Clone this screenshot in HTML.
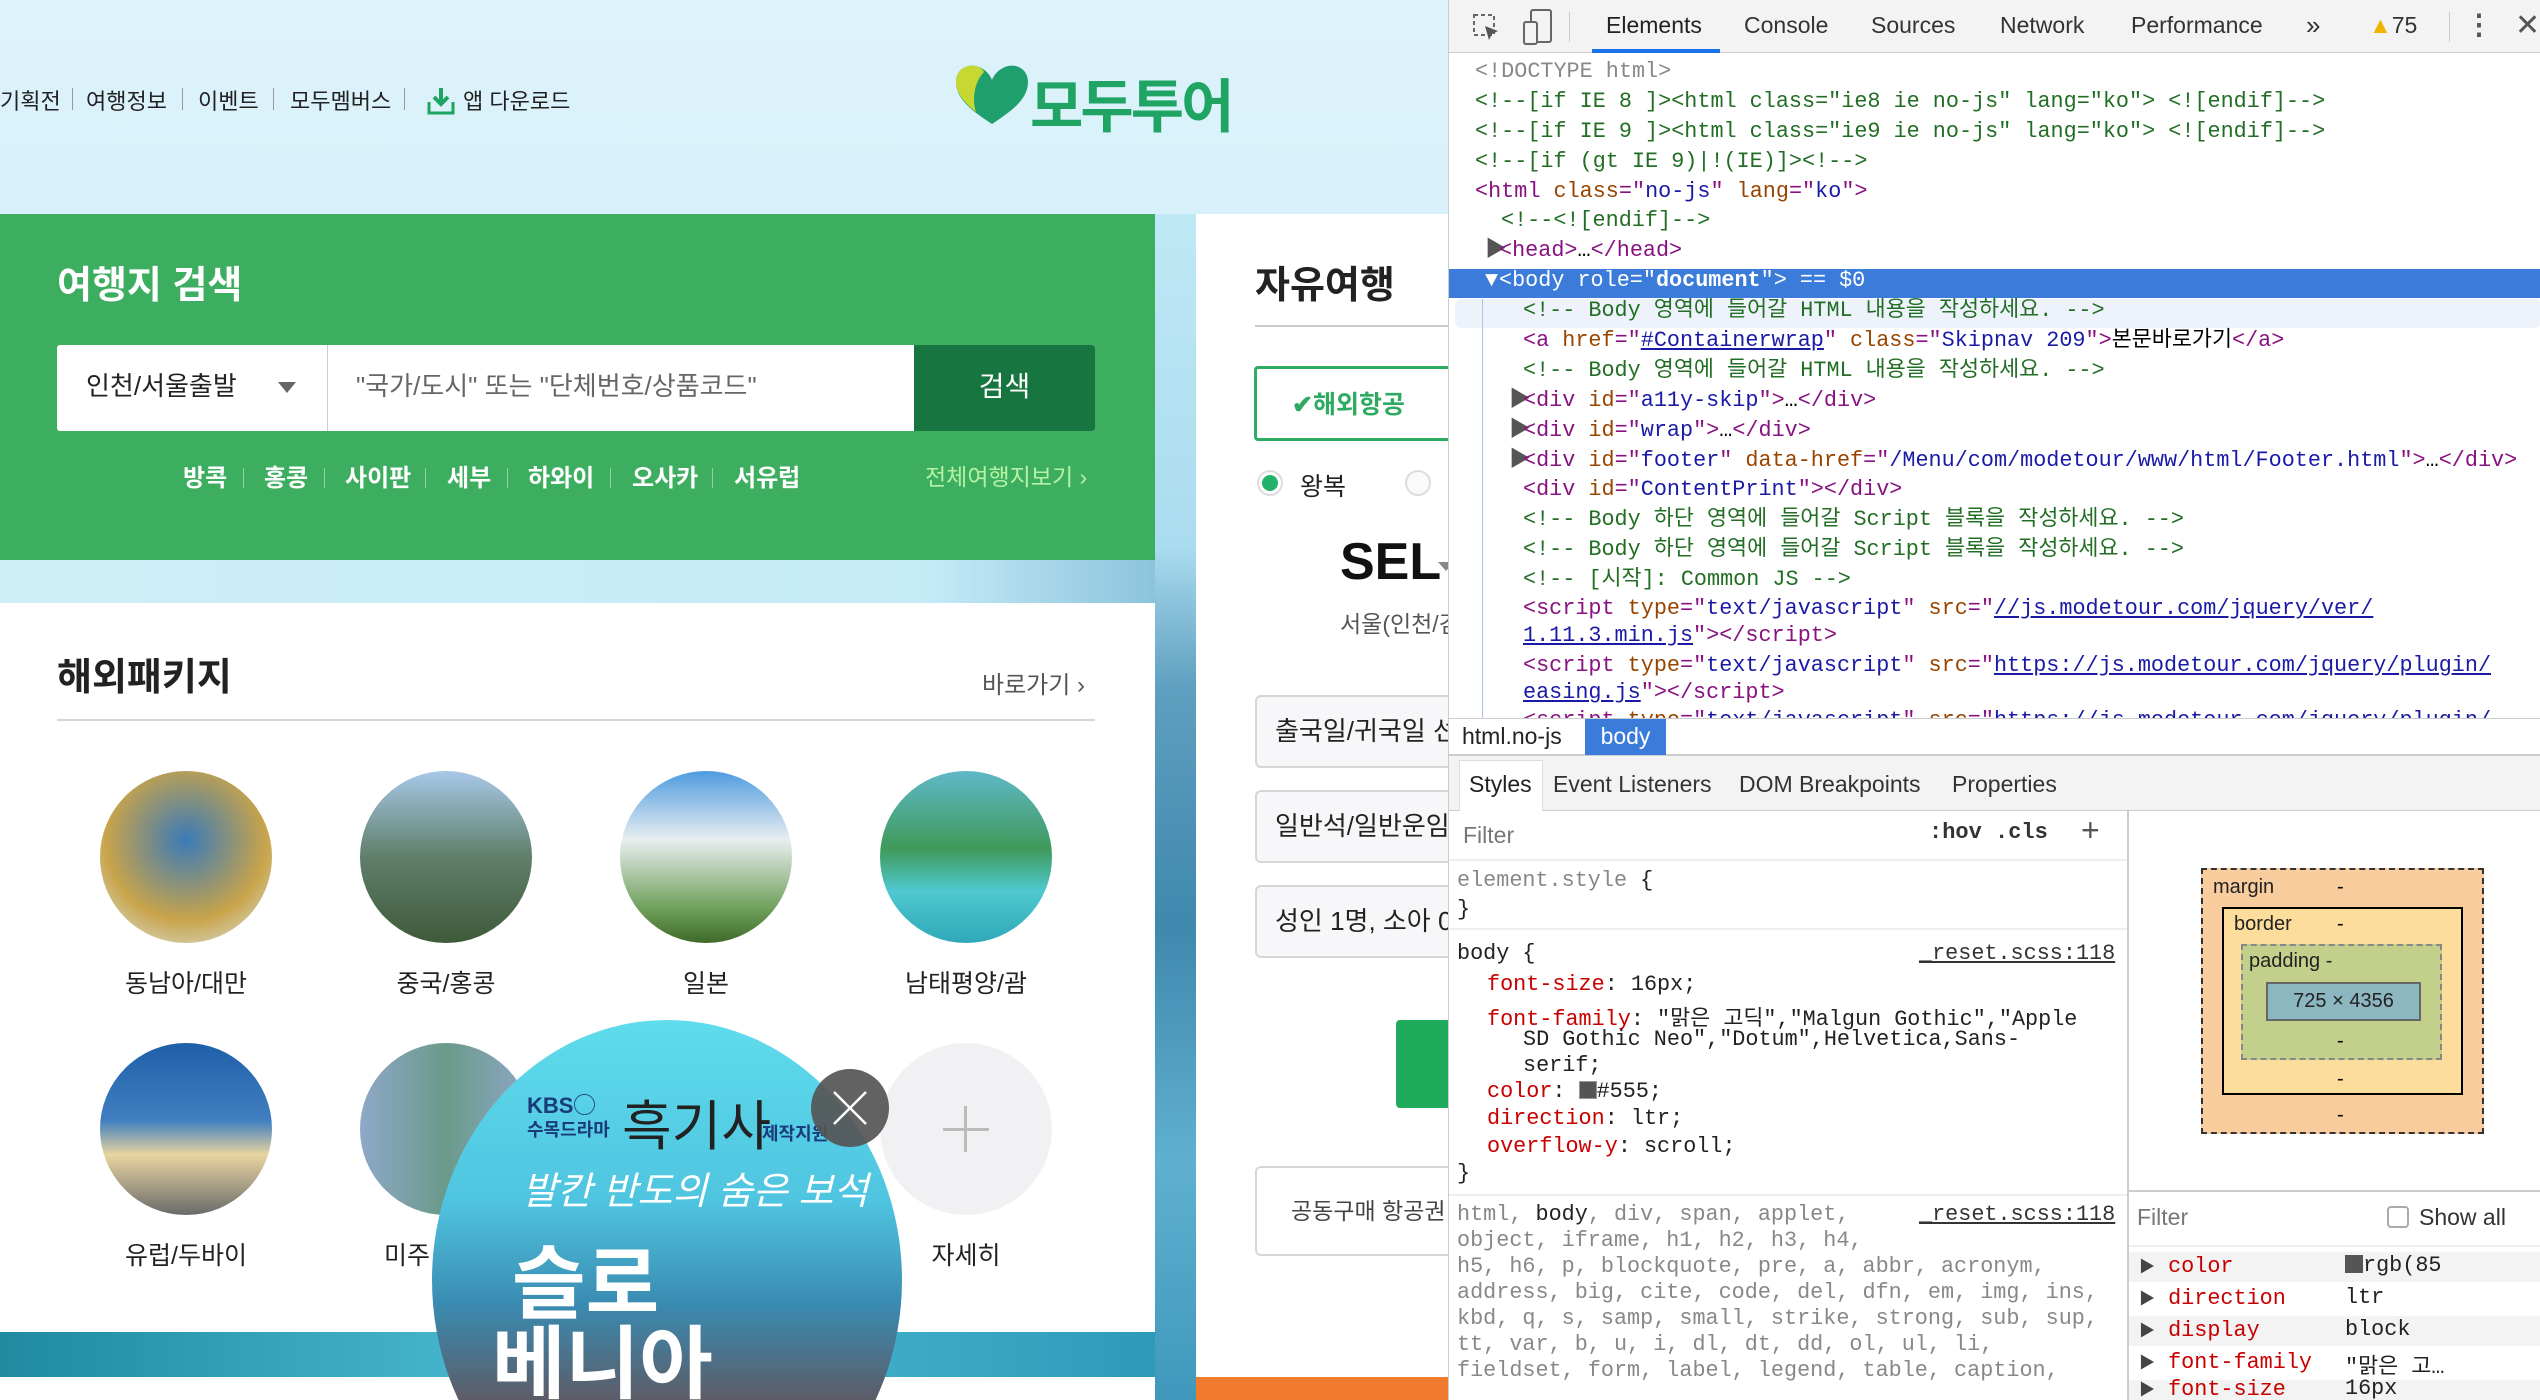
<!DOCTYPE html>
<html style="overflow:hidden"><head><meta charset="utf-8"><style>
*{margin:0;padding:0;box-sizing:border-box}
html,body{width:2540px;height:1400px;overflow:hidden}
body{position:relative;font-family:"Liberation Sans","Noto Sans CJK KR",sans-serif;background:#fff}
.a{position:absolute;white-space:nowrap}
#left{position:absolute;left:0;top:0;width:1448px;height:1400px;overflow:hidden;background:linear-gradient(180deg,#dff3fb 0%,#d2effa 25%,#bfe9f6 45%,#9fd6e8 70%,#5fb0cc 100%)}
.nav{top:84px;font-size:22px;color:#222}
.sep{top:88px;width:1px;height:22px;background:#999}
.circ{position:absolute;width:172px;height:172px;border-radius:50%}
.lbl{font-size:25px;color:#222;text-align:center;width:260px}
.fld{position:absolute;left:1255px;width:260px;background:#f7f7f9;border:2px solid #d6d6d6;border-radius:6px;font-size:26px;color:#222;padding-left:18px;white-space:nowrap;overflow:hidden}
#dt{position:absolute;left:1448px;top:0;width:1092px;height:1400px;background:#fff;border-left:1px solid #ccc;overflow:hidden}
.m{font-family:"Liberation Mono","Noto Sans CJK KR",monospace;font-size:21.8px;line-height:29.9px;white-space:normal}
.m div{height:29.9px;white-space:pre}
.tag{color:#881280}.at{color:#994500}.av{color:#1a1aa6}.cm{color:#236e25}.lk{color:#1a1aa6;text-decoration:underline}
.pr{color:#c80000}
.s{font-family:"Liberation Mono","Noto Sans CJK KR",monospace;font-size:21.8px;white-space:pre;position:absolute;color:#222}
.g{color:#888}
.tri{color:#555;display:inline-block;width:14px;margin-left:-14px}
</style></head><body>
<div id="left">
  <div class="a nav" style="left:0">기획전</div><div class="a sep" style="left:72px"></div>
  <div class="a nav" style="left:86px">여행정보</div><div class="a sep" style="left:182px"></div>
  <div class="a nav" style="left:198px">이벤트</div><div class="a sep" style="left:273px"></div>
  <div class="a nav" style="left:290px">모두멤버스</div><div class="a sep" style="left:404px"></div>
  <svg class="a" style="left:426px;top:86px" width="30" height="30" viewBox="0 0 30 30"><path d="M15 2v16M8 11l7 7 7-7" stroke="#1fa463" stroke-width="4" fill="none"/><path d="M3 16v11h24V16" stroke="#1fa463" stroke-width="3" fill="none"/></svg>
  <div class="a nav" style="left:463px">앱 다운로드</div>
  <svg class="a" style="left:954px;top:64px" width="76" height="62" viewBox="0 0 76 62"><path d="M38 60 C20 48 2 36 2 18 C2 6 12 0 22 2 C30 4 36 10 38 16 C40 10 46 4 54 2 C64 0 74 6 74 18 C74 36 56 48 38 60Z" fill="#1f9e6e"/><path d="M22 2 C12 0 2 6 2 18 C2 30 12 40 22 48 C18 36 20 18 30 8 C28 4 25 3 22 2Z" fill="#c8d832"/></svg>
  <div class="a" style="left:1030px;top:60px;font-size:58px;font-weight:bold;color:#1fa463;letter-spacing:-3px">모두투어</div>
  <div class="a" style="left:0;top:214px;width:1155px;height:346px;background:#3dae5f"></div>
  <div class="a" style="left:57px;top:254px;font-size:38px;font-weight:bold;color:#fff">여행지 검색</div>
  <div class="a" style="left:57px;top:345px;width:1038px;height:86px;background:#fff;border-radius:3px"></div>
  <div class="a" style="left:327px;top:345px;width:1px;height:86px;background:#ccc"></div>
  <div class="a" style="left:86px;top:366px;font-size:26px;color:#222">인천/서울출발</div>
  <div class="a" style="left:278px;top:382px;width:0;height:0;border-left:9px solid transparent;border-right:9px solid transparent;border-top:11px solid #666"></div>
  <div class="a" style="left:356px;top:366px;font-size:26px;color:#666">"국가/도시" 또는 "단체번호/상품코드"</div>
  <div class="a" style="left:914px;top:345px;width:181px;height:86px;background:#17763f;border-radius:0 3px 3px 0;color:#fff;font-size:28px;text-align:center;line-height:84px">검색</div>
  <div class="a" style="left:183px;top:458px;font-size:24px;color:#fff;font-weight:bold">방콕</div>
  <div class="a" style="left:264px;top:458px;font-size:24px;color:#fff;font-weight:bold">홍콩</div>
  <div class="a" style="left:345px;top:458px;font-size:24px;color:#fff;font-weight:bold">사이판</div>
  <div class="a" style="left:447px;top:458px;font-size:24px;color:#fff;font-weight:bold">세부</div>
  <div class="a" style="left:528px;top:458px;font-size:24px;color:#fff;font-weight:bold">하와이</div>
  <div class="a" style="left:632px;top:458px;font-size:24px;color:#fff;font-weight:bold">오사카</div>
  <div class="a" style="left:734px;top:458px;font-size:24px;color:#fff;font-weight:bold">서유럽</div>
  <div class="a" style="left:243px;top:468px;width:1px;height:20px;background:#8fd19f"></div>
  <div class="a" style="left:324px;top:468px;width:1px;height:20px;background:#8fd19f"></div>
  <div class="a" style="left:425px;top:468px;width:1px;height:20px;background:#8fd19f"></div>
  <div class="a" style="left:507px;top:468px;width:1px;height:20px;background:#8fd19f"></div>
  <div class="a" style="left:610px;top:468px;width:1px;height:20px;background:#8fd19f"></div>
  <div class="a" style="left:712px;top:468px;width:1px;height:20px;background:#8fd19f"></div>
  <div class="a" style="left:925px;top:458px;font-size:23px;color:#b6f2a6">전체여행지보기 ›</div>
  <div class="a" style="left:1155px;top:214px;width:41px;height:1186px;background:linear-gradient(180deg,#bfe8f5 0%,#aadcef 28%,#5f9fc0 40%,#3f88ae 60%,#5fb0d0 80%,#3f98bc 100%)"></div>
  <div class="a" style="left:0;top:560px;width:1155px;height:43px;background:linear-gradient(90deg,#cfeef8,#c5ebf7 80%,#8cc4dc)"></div>
  <div class="a" style="left:0;top:603px;width:1155px;height:729px;background:#fff"></div>
  <div class="a" style="left:57px;top:646px;font-size:38px;font-weight:bold;color:#222">해외패키지</div>
  <div class="a" style="left:982px;top:665px;font-size:24px;color:#555">바로가기 ›</div>
  <div class="a" style="left:57px;top:719px;width:1038px;height:2px;background:#d6d6d6"></div>
  <div class="circ" style="left:100px;top:771px;background:radial-gradient(circle at 50% 40%,#3a7ab8,#c9a44a 60%,#d8ecf8)"></div>
  <div class="circ" style="left:360px;top:771px;background:linear-gradient(180deg,#a8c8e8,#5f7f6a 50%,#3f5a3a)"></div>
  <div class="circ" style="left:620px;top:771px;background:linear-gradient(180deg,#4f9be0,#e8eef0 40%,#6fa05a 80%,#3f6a2a)"></div>
  <div class="circ" style="left:880px;top:771px;background:linear-gradient(180deg,#5fb8c8,#3f9a5a 45%,#4fc8d0 70%,#2fa8b8)"></div>
  <div class="a lbl" style="left:56px;top:964px">동남아/대만</div>
  <div class="a lbl" style="left:316px;top:964px">중국/홍콩</div>
  <div class="a lbl" style="left:576px;top:964px">일본</div>
  <div class="a lbl" style="left:836px;top:964px">남태평양/괌</div>
  <div class="circ" style="left:100px;top:1043px;background:linear-gradient(180deg,#1f5fa8,#3f7fc0 45%,#e8d4a0 65%,#6a6a6a)"></div>
  <div class="circ" style="left:360px;top:1043px;background:linear-gradient(90deg,#8fa8c8,#6a9a8a 50%,#8fa8c8)"></div>
  <div class="circ" style="left:880px;top:1043px;background:#f1f1f4"></div>
  <div class="a" style="left:964px;top:1106px;width:3px;height:46px;background:#bbb"></div>
  <div class="a" style="left:943px;top:1128px;width:46px;height:3px;background:#bbb"></div>
  <div class="a lbl" style="left:56px;top:1236px">유럽/두바이</div>
  <div class="a" style="left:384px;top:1236px;font-size:25px;color:#222">미주</div>
  <div class="a lbl" style="left:836px;top:1236px">자세히</div>
  <div class="a" style="left:0;top:1332px;width:1155px;height:45px;background:linear-gradient(90deg,#1f8aa0,#4fc0d8,#2f9ab8)"></div>
  <div class="a" style="left:0;top:1377px;width:1155px;height:23px;background:#fff"></div>
  <div class="a" style="left:432px;top:1020px;width:470px;height:380px;overflow:hidden">
   <div class="a" style="left:0;top:0;width:470px;height:520px;border-radius:50%;overflow:hidden;background:linear-gradient(180deg,#5fdcec 0%,#4fc4e0 35%,#3a8ab0 55%,#6a4a4a 80%,#3a2a3a)">
    <div class="a" style="left:95px;top:68px;font-size:22px;font-weight:bold;color:#1a3a7a">KBS◯</div>
    <div class="a" style="left:95px;top:96px;font-size:18px;font-weight:bold;color:#1a3a7a">수목드라마</div>
    <div class="a" style="left:190px;top:62px;font-size:54px;color:#222">흑기사</div>
    <div class="a" style="left:330px;top:100px;font-size:18px;font-weight:bold;color:#1a3a7a">제작지원</div>
    <div class="a" style="left:90px;top:140px;font-size:38px;color:#fff;font-style:italic">발칸 반도의 숨은 보석</div>
    <div class="a" style="left:80px;top:200px;font-size:80px;font-weight:bold;color:#fff">슬로</div>
    <div class="a" style="left:60px;top:280px;font-size:80px;font-weight:bold;color:#fff">베니아</div>
   </div>
  </div>
  <div class="a" style="left:811px;top:1069px;width:78px;height:78px;border-radius:50%;background:#555;opacity:.92"></div>
  <svg class="a" style="left:830px;top:1088px" width="40" height="40"><path d="M4 4L36 36M36 4L4 36" stroke="#fff" stroke-width="2.5"/></svg>
  <div class="a" style="left:1196px;top:214px;width:260px;height:1163px;background:#fff"></div>
  <div class="a" style="left:1196px;top:1377px;width:260px;height:23px;background:#f07a2e"></div>
  <div class="a" style="left:1255px;top:254px;font-size:38px;font-weight:bold;color:#222">자유여행</div>
  <div class="a" style="left:1255px;top:325px;width:200px;height:2px;background:#ccc"></div>
  <div class="a" style="left:1254px;top:366px;width:200px;height:75px;border:3px solid #2eaa62;border-radius:4px"></div>
  <div class="a" style="left:1292px;top:385px;font-size:25px;font-weight:bold;color:#2eaa62">✔해외항공</div>
  <div class="a" style="left:1257px;top:470px;width:26px;height:26px;border-radius:50%;border:2px solid #ddd;background:#fff"></div>
  <div class="a" style="left:1262px;top:475px;width:16px;height:16px;border-radius:50%;background:#22b26a"></div>
  <div class="a" style="left:1300px;top:467px;font-size:25px;color:#222">왕복</div>
  <div class="a" style="left:1405px;top:470px;width:26px;height:26px;border-radius:50%;border:2px solid #ddd;background:#fafafa"></div>
  <div class="a" style="left:1340px;top:532px;font-size:52px;font-weight:bold;color:#111">SEL</div>
  <div class="a" style="left:1438px;top:562px;border-left:8px solid transparent;border-right:8px solid transparent;border-top:9px solid #888"></div>
  <div class="a" style="left:1340px;top:605px;font-size:23px;color:#555">서울(인천/김포)</div>
  <div class="fld" style="top:695px;height:73px;line-height:69px">출국일/귀국일 선택</div>
  <div class="fld" style="top:790px;height:73px;line-height:69px">일반석/일반운임</div>
  <div class="fld" style="top:885px;height:73px;line-height:69px">성인 1명, 소아 0명</div>
  <div class="a" style="left:1396px;top:1020px;width:80px;height:88px;background:#1faa5c;border-radius:4px"></div>
  <div class="fld" style="top:1166px;height:90px;line-height:86px;background:#fff;font-size:23px;padding-left:34px;color:#444">공동구매 항공권</div>
</div>

<div id="dt">
  <div class="a" style="left:0;top:0;width:1092px;height:53px;background:#f3f3f3;border-bottom:1px solid #ccc"></div>
  <svg class="a" style="left:22px;top:12px" width="32" height="32"><rect x="3" y="3" width="20" height="20" fill="none" stroke="#666" stroke-width="2" stroke-dasharray="4 3"/><path d="M14 14l4 14 3-6 6-3z" fill="#555"/></svg>
  <svg class="a" style="left:72px;top:8px" width="34" height="38"><rect x="10" y="2" width="20" height="32" rx="2" fill="none" stroke="#666" stroke-width="2"/><rect x="3" y="14" width="13" height="22" rx="2" fill="#f3f3f3" stroke="#666" stroke-width="2"/></svg>
  <div class="a" style="left:120px;top:12px;width:1px;height:30px;background:#ccc"></div>
  <div class="a" style="left:157px;top:12px;font-size:23px;color:#222">Elements</div>
  <div class="a" style="left:143px;top:49px;width:128px;height:4px;background:#1a73e8"></div>
  <div class="a" style="left:295px;top:12px;font-size:23px;color:#333">Console</div>
  <div class="a" style="left:422px;top:12px;font-size:23px;color:#333">Sources</div>
  <div class="a" style="left:551px;top:12px;font-size:23px;color:#333">Network</div>
  <div class="a" style="left:682px;top:12px;font-size:23px;color:#333">Performance</div>
  <div class="a" style="left:857px;top:10px;font-size:26px;color:#333">»</div>
  <div class="a" style="left:920px;top:12px;font-size:23px;color:#333"><span style="color:#f0b400">▲</span>75</div>
  <div class="a" style="left:1000px;top:12px;width:1px;height:30px;background:#ccc"></div>
  <div class="a" style="left:1016px;top:8px;font-size:28px;color:#555;font-weight:bold">⋮</div>
  <div class="a" style="left:1066px;top:8px;font-size:30px;color:#555">✕</div>

  <div class="a" style="left:0;top:54px;width:1092px;height:664px;overflow:hidden">
  <div class="a" style="left:0;top:215px;width:1092px;height:29px;background:#3b7bd9"></div>
  <div class="a" style="left:6px;top:245px;width:1086px;height:29px;background:#eef3fb;border-radius:6px"></div>
  <div class="a" style="left:33px;top:245px;width:1px;height:420px;background:#a8c4ec"></div>
  <div class="a m" style="left:26px;top:3px"><div><span class="g">&lt;!DOCTYPE html&gt;</span></div><div class="cm">&lt;!--[if IE 8 ]&gt;&lt;html class="ie8 ie no-js" lang="ko"&gt; &lt;![endif]--&gt;</div><div class="cm">&lt;!--[if IE 9 ]&gt;&lt;html class="ie9 ie no-js" lang="ko"&gt; &lt;![endif]--&gt;</div><div class="cm">&lt;!--[if (gt IE 9)|!(IE)]&gt;&lt;!--&gt;</div><div><span class="tag">&lt;html </span><span class="at">class</span><span class="tag">="</span><span class="av">no-js</span><span class="tag">" </span><span class="at">lang</span><span class="tag">="</span><span class="av">ko</span><span class="tag">"&gt;</span></div><div style="padding-left:26px" class="cm">&lt;!--&lt;![endif]--&gt;</div><div style="padding-left:24px"><span class="tri">▶</span><span class="tag">&lt;head&gt;</span>…<span class="tag">&lt;/head&gt;</span></div><div style="padding-left:24px;color:#fff"><span class="tri" style="color:#fff">▼</span>&lt;body role="<b>document</b>"&gt; == $0</div><div style="padding-left:48px" class="cm">&lt;!-- Body 영역에 들어갈 HTML 내용을 작성하세요. --&gt;</div><div style="padding-left:48px"><span class="tag">&lt;a </span><span class="at">href</span><span class="tag">="</span><span class="lk">#Containerwrap</span><span class="tag">" </span><span class="at">class</span><span class="tag">="</span><span class="av">Skipnav 209</span><span class="tag">"&gt;</span>본문바로가기<span class="tag">&lt;/a&gt;</span></div><div style="padding-left:48px" class="cm">&lt;!-- Body 영역에 들어갈 HTML 내용을 작성하세요. --&gt;</div><div style="padding-left:48px"><span class="tri">▶</span><span class="tag">&lt;div </span><span class="at">id</span><span class="tag">="</span><span class="av">a11y-skip</span><span class="tag">"&gt;</span>…<span class="tag">&lt;/div&gt;</span></div><div style="padding-left:48px"><span class="tri">▶</span><span class="tag">&lt;div </span><span class="at">id</span><span class="tag">="</span><span class="av">wrap</span><span class="tag">"&gt;</span>…<span class="tag">&lt;/div&gt;</span></div><div style="padding-left:48px"><span class="tri">▶</span><span class="tag">&lt;div </span><span class="at">id</span><span class="tag">="</span><span class="av">footer</span><span class="tag">" </span><span class="at">data-href</span><span class="tag">="</span><span class="av">/Menu/com/modetour/www/html/Footer.html</span><span class="tag">"&gt;</span>…<span class="tag">&lt;/div&gt;</span></div><div style="padding-left:48px"><span class="tag">&lt;div </span><span class="at">id</span><span class="tag">="</span><span class="av">ContentPrint</span><span class="tag">"&gt;&lt;/div&gt;</span></div><div style="padding-left:48px" class="cm">&lt;!-- Body 하단 영역에 들어갈 Script 블록을 작성하세요. --&gt;</div><div style="padding-left:48px" class="cm">&lt;!-- Body 하단 영역에 들어갈 Script 블록을 작성하세요. --&gt;</div><div style="padding-left:48px" class="cm">&lt;!-- [시작]: Common JS --&gt;</div><div style="padding-left:48px;height:27px;line-height:27px"><span class="tag">&lt;script </span><span class="at">type</span><span class="tag">="</span><span class="av">text/javascript</span><span class="tag">" </span><span class="at">src</span><span class="tag">="</span><span class="lk">//js.modetour.com/jquery/ver/</span></div><div style="padding-left:48px;height:30px;line-height:27px"><span class="lk">1.11.3.min.js</span><span class="tag">"&gt;&lt;/script&gt;</span></div><div style="padding-left:48px;height:27px;line-height:27px"><span class="tag">&lt;script </span><span class="at">type</span><span class="tag">="</span><span class="av">text/javascript</span><span class="tag">" </span><span class="at">src</span><span class="tag">="</span><span class="lk">https://js.modetour.com/jquery/plugin/</span></div><div style="padding-left:48px;height:27px;line-height:27px"><span class="lk">easing.js</span><span class="tag">"&gt;&lt;/script&gt;</span></div><div style="padding-left:48px"><span class="tag">&lt;script </span><span class="at">type</span><span class="tag">="</span><span class="av">text/javascript</span><span class="tag">" </span><span class="at">src</span><span class="tag">="</span><span class="lk">https://js.modetour.com/jquery/plugin/</span></div></div>
  </div>
  <div class="a" style="left:0;top:718px;width:1092px;height:38px;background:#fff;border-top:1px solid #ccc;border-bottom:2px solid #ccc"></div>
  <div class="a" style="left:13px;top:723px;font-size:23px;color:#222">html.no-js</div>
  <div class="a" style="left:136px;top:719px;width:81px;height:36px;background:#3b7bd9;color:#fff;font-size:23px;text-align:center;line-height:34px">body</div>
  <div class="a" style="left:0;top:756px;width:1092px;height:55px;background:#f3f3f3;border-bottom:1px solid #ccc"></div>
  <div class="a" style="left:10px;top:760px;width:84px;height:51px;background:#fff;border:1px solid #ddd;border-bottom:none"></div>
  <div class="a" style="left:20px;top:771px;font-size:23px;color:#222">Styles</div>
  <div class="a" style="left:104px;top:771px;font-size:23px;color:#333">Event Listeners</div>
  <div class="a" style="left:290px;top:771px;font-size:23px;color:#333">DOM Breakpoints</div>
  <div class="a" style="left:503px;top:771px;font-size:23px;color:#333">Properties</div>
  <div class="a" style="left:678px;top:811px;width:2px;height:589px;background:#ccc"></div>
  <div class="a" style="left:14px;top:822px;font-size:23px;color:#777">Filter</div>
  <div class="a" style="left:480px;top:820px;font-size:22px;color:#333;font-family:'Liberation Mono',monospace;font-weight:bold">:hov  .cls</div>
  <div class="a" style="left:632px;top:812px;font-size:32px;color:#555">+</div>
  <div class="a" style="left:0;top:859px;width:678px;height:2px;background:#eee"></div>
  <div class="s" style="left:8px;top:868px"><span class="g">element.style</span> {</div>
  <div class="s" style="left:8px;top:897px">}</div>
  <div class="a" style="left:0;top:928px;width:678px;height:2px;background:#eee"></div>
  <div class="s" style="left:8px;top:941px">body {</div>
  <div class="s" style="left:470px;top:941px;color:#333;text-decoration:underline">_reset.scss:118</div>
  <div class="s" style="left:38px;top:972px"><span class="pr">font-size</span>: 16px;</div>
  <div class="s" style="left:38px;top:1001px"><span class="pr">font-family</span>: "맑은 고딕","Malgun Gothic","Apple</div>
  <div class="s" style="left:74px;top:1027px">SD Gothic Neo","Dotum",Helvetica,Sans-</div>
  <div class="s" style="left:74px;top:1053px">serif;</div>
  <div class="s" style="left:38px;top:1079px"><span class="pr">color</span>: <span style="display:inline-block;width:18px;height:18px;background:#555;border:1px solid #999;vertical-align:-2px"></span>#555;</div>
  <div class="s" style="left:38px;top:1106px"><span class="pr">direction</span>: ltr;</div>
  <div class="s" style="left:38px;top:1134px"><span class="pr">overflow-y</span>: scroll;</div>
  <div class="s" style="left:8px;top:1161px">}</div>
  <div class="a" style="left:0;top:1194px;width:678px;height:2px;background:#eee"></div>
  <div class="s g" style="left:8px;top:1202px;line-height:26px">html, <span style="color:#222">body</span>, div, span, applet,
object, iframe, h1, h2, h3, h4,
h5, h6, p, blockquote, pre, a, abbr, acronym,
address, big, cite, code, del, dfn, em, img, ins,
kbd, q, s, samp, small, strike, strong, sub, sup,
tt, var, b, u, i, dl, dt, dd, ol, ul, li,
fieldset, form, label, legend, table, caption,</div>
  <div class="s" style="left:470px;top:1202px;color:#333;text-decoration:underline">_reset.scss:118</div>
  <div class="a" style="left:752px;top:868px;width:283px;height:266px;background:#f9cc9d;border:2px dashed #333"></div>
  <div class="a" style="left:764px;top:876px;font-size:20px;color:#222">margin</div>
  <div class="a" style="left:888px;top:876px;font-size:20px">-</div>
  <div class="a" style="left:773px;top:907px;width:241px;height:188px;background:#fddd9b;border:2px solid #000"></div>
  <div class="a" style="left:785px;top:913px;font-size:20px;color:#222">border</div>
  <div class="a" style="left:888px;top:913px;font-size:20px">-</div>
  <div class="a" style="left:792px;top:944px;width:201px;height:116px;background:#c3d08b;border:2px dashed #888"></div>
  <div class="a" style="left:800px;top:950px;font-size:20px;color:#222">padding -</div>
  <div class="a" style="left:817px;top:982px;width:155px;height:39px;background:#8cb6c0;border:2px solid #666;text-align:center;font-size:20px;line-height:35px;color:#222">725 × 4356</div>
  <div class="a" style="left:888px;top:1030px;font-size:20px">-</div>
  <div class="a" style="left:888px;top:1068px;font-size:20px">-</div>
  <div class="a" style="left:888px;top:1104px;font-size:20px">-</div>
  <div class="a" style="left:680px;top:1190px;width:412px;height:2px;background:#ccc"></div>
  <div class="a" style="left:688px;top:1204px;font-size:23px;color:#777">Filter</div>
  <div class="a" style="left:938px;top:1206px;width:22px;height:22px;border:2px solid #aaa;border-radius:4px"></div>
  <div class="a" style="left:970px;top:1204px;font-size:23px;color:#333">Show all</div>
  <div class="a" style="left:680px;top:1245px;width:412px;height:2px;background:#eee"></div>
  <div class="a" style="left:680px;top:1252px;width:412px;height:30px;background:#f3f3f3"></div>
  <div class="a" style="left:680px;top:1316px;width:412px;height:30px;background:#f3f3f3"></div>
  <div class="a" style="left:680px;top:1380px;width:412px;height:20px;background:#f3f3f3"></div>
  <div class="s" style="left:690px;top:1253px"><span style="color:#444;font-size:16px">▶</span><span class="pr"> color</span></div>
  <div class="s" style="left:690px;top:1285px"><span style="color:#444;font-size:16px">▶</span><span class="pr"> direction</span></div>
  <div class="s" style="left:690px;top:1317px"><span style="color:#444;font-size:16px">▶</span><span class="pr"> display</span></div>
  <div class="s" style="left:690px;top:1349px"><span style="color:#444;font-size:16px">▶</span><span class="pr"> font-family</span></div>
  <div class="s" style="left:690px;top:1376px"><span style="color:#444;font-size:16px">▶</span><span class="pr"> font-size</span></div>
  <div class="s" style="left:896px;top:1253px"><span style="display:inline-block;width:18px;height:18px;background:#555;vertical-align:-2px"></span>rgb(85</div>
  <div class="s" style="left:896px;top:1285px">ltr</div>
  <div class="s" style="left:896px;top:1317px">block</div>
  <div class="s" style="left:896px;top:1349px">"맑은 고…</div>
  <div class="s" style="left:896px;top:1376px">16px</div>
</div>
</body></html>
